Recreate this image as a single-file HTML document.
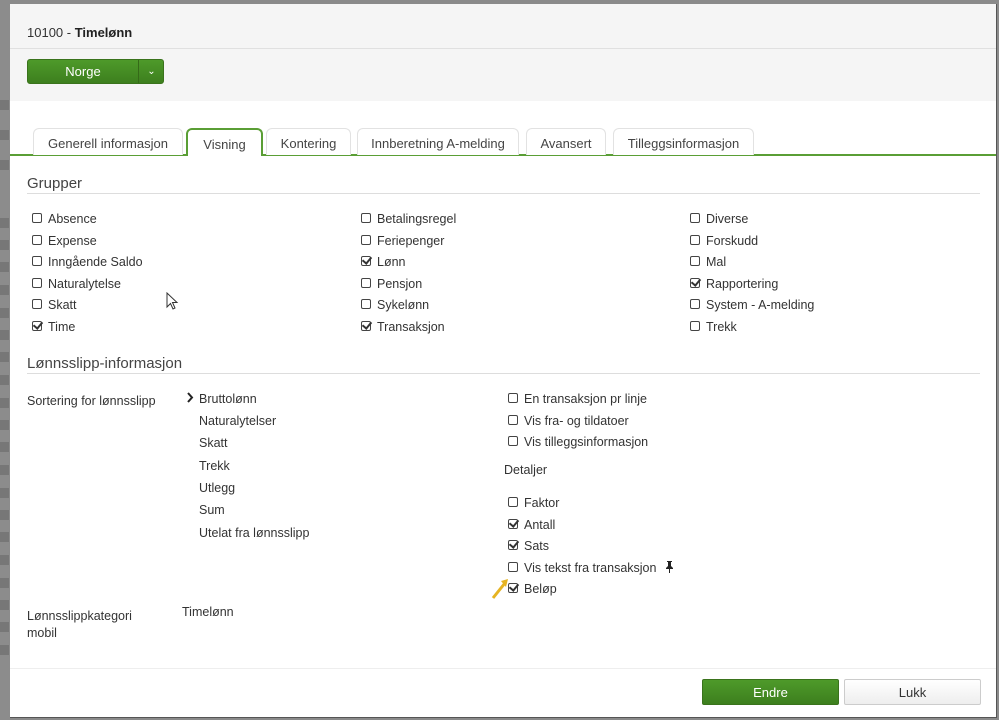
<!DOCTYPE html>
<html><head><meta charset="utf-8"><style>
*{margin:0;padding:0;box-sizing:border-box}
body{width:999px;height:720px;overflow:hidden;background:#8a8a8a;font-family:"Liberation Sans",sans-serif;font-size:12.5px;color:#333;position:relative}
.strip{position:absolute;left:0;top:0;width:10px;height:720px;background:#8c8c8c}
.strip i{position:absolute;left:0;width:9px;height:10px;background:#777}
.modal{position:absolute;left:10px;top:4px;width:987px;height:714px;background:#fff;border-right:1px solid #555;border-bottom:1px solid #555}
.a{position:absolute;white-space:nowrap}
.t{margin-top:1px}
.hdr{position:absolute;left:0;top:0;width:986px;height:97px;background:#f5f5f5}
.cb{position:absolute;width:10px;height:10px;border:1.3px solid #444;border-radius:2px;background:#fff}
.cb.c::after{content:"";position:absolute;left:2px;top:-2px;width:4px;height:7px;border-right:2px solid #333;border-bottom:2px solid #333;transform:rotate(40deg)}
.tab{position:absolute;top:124px;height:27px;border:1px solid #e2e2e2;border-bottom:none;border-radius:6px 6px 0 0;background:#fff;text-align:center;line-height:29px;color:#444;font-size:13px}
.btn{position:absolute;border-radius:2px;text-align:center;font-size:13px}
</style></head><body>
<div class="strip">
<i style="top:100px"></i><i style="top:130px"></i><i style="top:160px"></i><i style="top:218px"></i><i style="top:240px"></i><i style="top:262px"></i><i style="top:285px"></i><i style="top:308px"></i><i style="top:330px"></i><i style="top:352px"></i><i style="top:375px"></i><i style="top:398px"></i><i style="top:420px"></i><i style="top:442px"></i><i style="top:465px"></i><i style="top:488px"></i><i style="top:510px"></i><i style="top:532px"></i><i style="top:555px"></i><i style="top:578px"></i><i style="top:600px"></i><i style="top:622px"></i><i style="top:645px"></i>
</div>
<div class="modal">
<div class="hdr"></div>
<div class="a" style="left:0;top:44px;width:986px;height:1px;background:#e0e0e0"></div>
<div class="a" style="left:17px;top:21px;font-size:13px">10100 - <b style="color:#222">Timelønn</b></div>
<div class="btn" style="left:17px;top:55px;width:137px;height:25px;background:linear-gradient(#4e9a2a,#3d7f1e);border:1px solid #3a731c;color:#fff;line-height:24px;border-radius:3px">
<span style="position:absolute;left:0;width:110px">Norge</span>
<span style="position:absolute;left:110px;top:0;width:1px;height:23px;background:#356a18"></span>
<span style="position:absolute;left:111px;width:25px;font-size:10px">&#8964;</span>
</div>
<div class="a" style="left:0;top:150px;width:986px;height:2px;background:#5a9e35"></div>
<div class="tab" style="left:23px;width:150px">Generell informasjon</div>
<div class="tab" style="left:176px;width:77px;border:2px solid #5a9e35;border-bottom:none;height:28px;z-index:2">Visning</div>
<div class="a" style="left:178px;top:150px;width:73px;height:3px;background:#fff;z-index:3"></div>
<div class="tab" style="left:256px;width:85px">Kontering</div>
<div class="tab" style="left:347px;width:162px">Innberetning A-melding</div>
<div class="tab" style="left:516px;width:80px">Avansert</div>
<div class="tab" style="left:603px;width:141px">Tilleggsinformasjon</div>

<div class="a" style="left:17px;top:171px;font-size:15px;color:#444">Grupper</div>
<div class="a" style="left:17px;top:189px;width:953px;height:1px;background:#ddd"></div>

<div class="cb" style="left:22px;top:209px"></div><div class="a t" style="left:38px;top:207px">Absence</div>
<div class="cb" style="left:22px;top:231px"></div><div class="a t" style="left:38px;top:229px">Expense</div>
<div class="cb" style="left:22px;top:252px"></div><div class="a t" style="left:38px;top:250px">Inngående Saldo</div>
<div class="cb" style="left:22px;top:274px"></div><div class="a t" style="left:38px;top:272px">Naturalytelse</div>
<div class="cb" style="left:22px;top:295px"></div><div class="a t" style="left:38px;top:293px">Skatt</div>
<div class="cb c" style="left:22px;top:317px"></div><div class="a t" style="left:38px;top:315px">Time</div>

<div class="cb" style="left:351px;top:209px"></div><div class="a t" style="left:367px;top:207px">Betalingsregel</div>
<div class="cb" style="left:351px;top:231px"></div><div class="a t" style="left:367px;top:229px">Feriepenger</div>
<div class="cb c" style="left:351px;top:252px"></div><div class="a t" style="left:367px;top:250px">Lønn</div>
<div class="cb" style="left:351px;top:274px"></div><div class="a t" style="left:367px;top:272px">Pensjon</div>
<div class="cb" style="left:351px;top:295px"></div><div class="a t" style="left:367px;top:293px">Sykelønn</div>
<div class="cb c" style="left:351px;top:317px"></div><div class="a t" style="left:367px;top:315px">Transaksjon</div>

<div class="cb" style="left:680px;top:209px"></div><div class="a t" style="left:696px;top:207px">Diverse</div>
<div class="cb" style="left:680px;top:231px"></div><div class="a t" style="left:696px;top:229px">Forskudd</div>
<div class="cb" style="left:680px;top:252px"></div><div class="a t" style="left:696px;top:250px">Mal</div>
<div class="cb c" style="left:680px;top:274px"></div><div class="a t" style="left:696px;top:272px">Rapportering</div>
<div class="cb" style="left:680px;top:295px"></div><div class="a t" style="left:696px;top:293px">System - A-melding</div>
<div class="cb" style="left:680px;top:317px"></div><div class="a t" style="left:696px;top:315px">Trekk</div>

<div class="a" style="left:17px;top:351px;font-size:15px;color:#444">Lønnsslipp-informasjon</div>
<div class="a" style="left:17px;top:369px;width:953px;height:1px;background:#ddd"></div>

<div class="a t" style="left:17px;top:389px">Sortering for lønnsslipp</div>
<svg class="a" style="left:176px;top:388px" width="8" height="11"><path d="M2 1 L6 5.5 L2 10" stroke="#222" stroke-width="2" fill="none"/></svg>
<div class="a t" style="left:189px;top:387px">Bruttolønn</div>
<div class="a t" style="left:189px;top:409px">Naturalytelser</div>
<div class="a t" style="left:189px;top:431px">Skatt</div>
<div class="a t" style="left:189px;top:454px">Trekk</div>
<div class="a t" style="left:189px;top:476px">Utlegg</div>
<div class="a t" style="left:189px;top:498px">Sum</div>
<div class="a t" style="left:189px;top:521px">Utelat fra lønnsslipp</div>

<div class="cb" style="left:498px;top:389px"></div><div class="a t" style="left:514px;top:387px">En transaksjon pr linje</div>
<div class="cb" style="left:498px;top:411px"></div><div class="a t" style="left:514px;top:409px">Vis fra- og tildatoer</div>
<div class="cb" style="left:498px;top:432px"></div><div class="a t" style="left:514px;top:430px">Vis tilleggsinformasjon</div>
<div class="a t" style="left:494px;top:458px">Detaljer</div>
<div class="cb" style="left:498px;top:493px"></div><div class="a t" style="left:514px;top:491px">Faktor</div>
<div class="cb c" style="left:498px;top:515px"></div><div class="a t" style="left:514px;top:513px">Antall</div>
<div class="cb c" style="left:498px;top:536px"></div><div class="a t" style="left:514px;top:534px">Sats</div>
<div class="cb" style="left:498px;top:558px"></div><div class="a t" style="left:514px;top:556px">Vis tekst fra transaksjon</div>
<svg class="a" style="left:655px;top:557px" width="9" height="12"><path d="M2 0 H7 V1 H6 V5 L8 7 V8 H5 V12 H4 V8 H1 V7 L3 5 V1 H2 Z" fill="#222"/></svg>
<div class="cb c" style="left:498px;top:579px"></div><div class="a t" style="left:514px;top:577px">Beløp</div>
<svg class="a" style="left:480px;top:574px" width="20" height="22"><path d="M3 20 L15 5" stroke="#e6b422" stroke-width="3"/><path d="M11 3 L18 1 L16 9 Z" fill="#e6b422"/></svg>

<div class="a" style="left:17px;top:604px;line-height:17px">Lønnsslippkategori<br>mobil</div>
<div class="a t" style="left:172px;top:600px">Timelønn</div>

<div class="a" style="left:0;top:664px;width:986px;height:1px;background:#eee"></div>
<div class="btn" style="left:692px;top:675px;width:137px;height:26px;background:linear-gradient(#4e9a2a,#3d7f1e);border:1px solid #3a731c;color:#fff;line-height:25px">Endre</div>
<div class="btn" style="left:834px;top:675px;width:137px;height:26px;background:linear-gradient(#fff,#eee);border:1px solid #ccc;color:#333;line-height:25px">Lukk</div>
</div>
<svg class="a" style="left:166px;top:292px" width="14" height="20"><path d="M1 1 L1 15 L4.5 11.5 L7 17 L9 16 L6.5 10.5 L11 10.5 Z" fill="#fff" stroke="#333" stroke-width="1"/></svg>
</body></html>
